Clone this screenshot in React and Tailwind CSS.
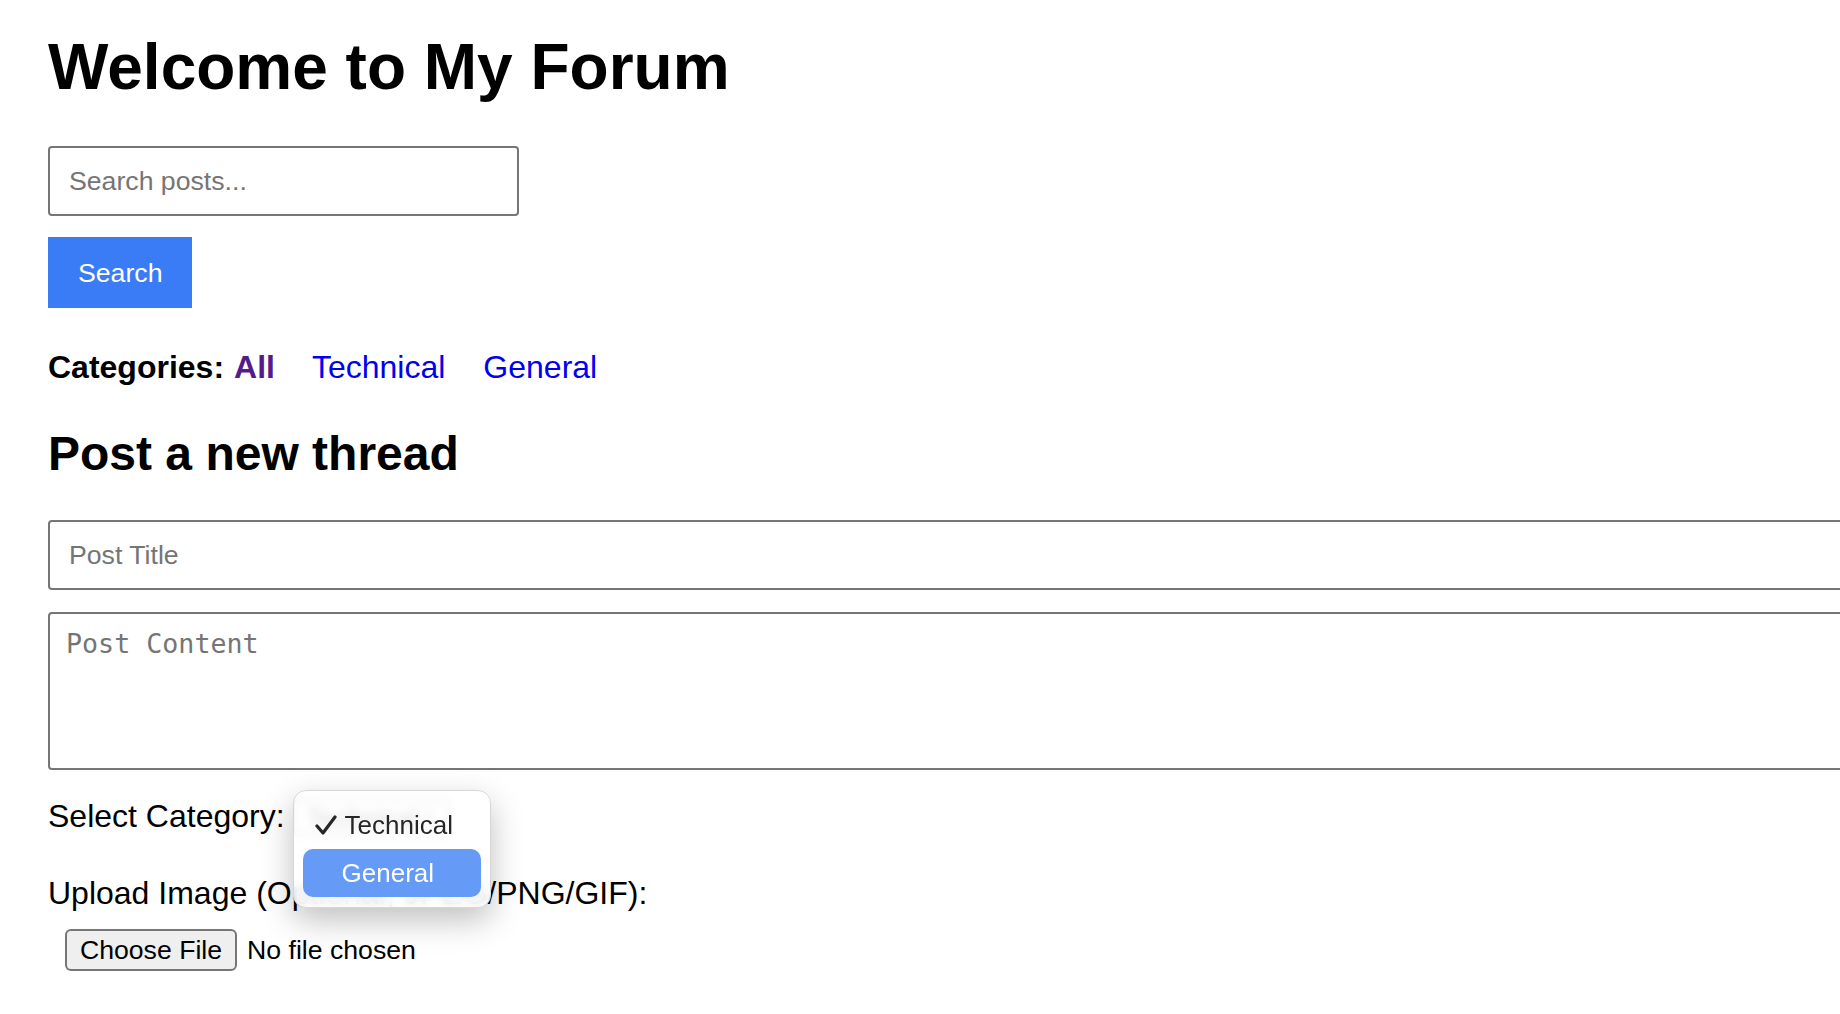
import React from 'react';

// native-looking select popup, drawn open over the select
const SelectMenu = () => (
  <div className="absolute left-[0px] top-[-8px] z-10 w-[198px] rounded-[13px] border border-[#d6d6d6] bg-white/[0.86] py-[10px] shadow-[0_12px_32px_rgba(0,0,0,0.25)] backdrop-blur-[5px]">
    <div className="mx-[9px] flex h-[48px] items-center pl-[12px] text-[26px] leading-[48px] text-[#262626]">
      <svg width="22" height="20" viewBox="0 0 22 20" className="mr-[8px] shrink-0">
        <path d="M2 11 L8 18 L20 2" fill="none" stroke="#262626" strokeWidth="3.2" strokeLinecap="round" strokeLinejoin="round" />
      </svg>
      <span>Technical</span>
    </div>
    <div className="mx-[9px] flex h-[48px] items-center rounded-[10px] bg-[#659bf6] pl-[39px] text-[26px] leading-[48px] text-white">
      General
    </div>
  </div>
);

export default function App() {
  return (
    <div className="min-h-screen w-full overflow-hidden bg-white pl-[48px] pt-[30px] font-['Liberation_Sans',Arial,sans-serif] text-black">
      <h1 className="text-[64px] font-bold leading-[74px]">Welcome to My Forum</h1>

      {/* search */}
      <input
        type="text"
        placeholder="Search posts..."
        className="mt-[42px] block h-[70px] w-[471px] rounded-[4px] border-2 border-[#767676] pl-[19px] text-[26.67px] outline-none placeholder:text-[#757575]"
      />
      <button className="mt-[21px] block h-[71px] bg-[#3a7cf5] px-[30px] text-[26.67px] text-white">
        Search
      </button>

      {/* category links */}
      <div className="mt-[41px] flex text-[32px] leading-[37px]">
        <span className="font-bold">Categories:</span>
        <a className="ml-[10px] font-bold text-[#551a8b]">All</a>
        <a className="ml-[37px] text-[#0000ee]">Technical</a>
        <a className="ml-[38px] text-[#0000ee]">General</a>
      </div>

      <h2 className="mt-[40px] text-[48px] font-bold leading-[55px]">Post a new thread</h2>

      <input
        type="text"
        placeholder="Post Title"
        className="mt-[39px] block h-[70px] w-[1830px] rounded-[4px] border-2 border-[#767676] pl-[19px] text-[26.67px] outline-none placeholder:text-[#757575]"
      />
      <textarea
        placeholder="Post Content"
        className="mt-[22px] block h-[158px] w-[1830px] resize-none rounded-[4px] border-2 border-[#767676] pl-[16px] pt-[14px] font-['DejaVu_Sans_Mono',monospace] text-[26.67px] leading-[31px] outline-none placeholder:text-[#757575]"
      />

      {/* category select */}
      <div className="mt-[28px] flex items-start text-[32px] leading-[37px]">
        <span>Select Category:</span>
        <div className="relative ml-[8px]">
          <div className="mt-[1px] flex h-[37px] w-[157px] items-center justify-between rounded-[6px] border-2 border-[#767676] bg-white px-[12px] text-[26.67px] leading-[30px]">
            <span>Technical</span>
            <svg width="14" height="22" viewBox="0 0 14 22">
              <path d="M3 8 L7 4 L11 8 M3 14 L7 18 L11 14" fill="none" stroke="#333" strokeWidth="2" />
            </svg>
          </div>
          <SelectMenu />
        </div>
      </div>

      <div className="mt-[39px] text-[32px] leading-[37px]">Upload Image (Optional, JPEG/PNG/GIF):</div>

      <div className="mt-[17px] flex items-center">
        <div className="ml-[17px] flex h-[42px] w-[172px] items-center justify-center rounded-[6px] border-2 border-[#767676] bg-[#efefef] text-[26.67px]">
          Choose File
        </div>
        <span className="ml-[10px] text-[26.67px]">No file chosen</span>
      </div>
    </div>
  );
}
